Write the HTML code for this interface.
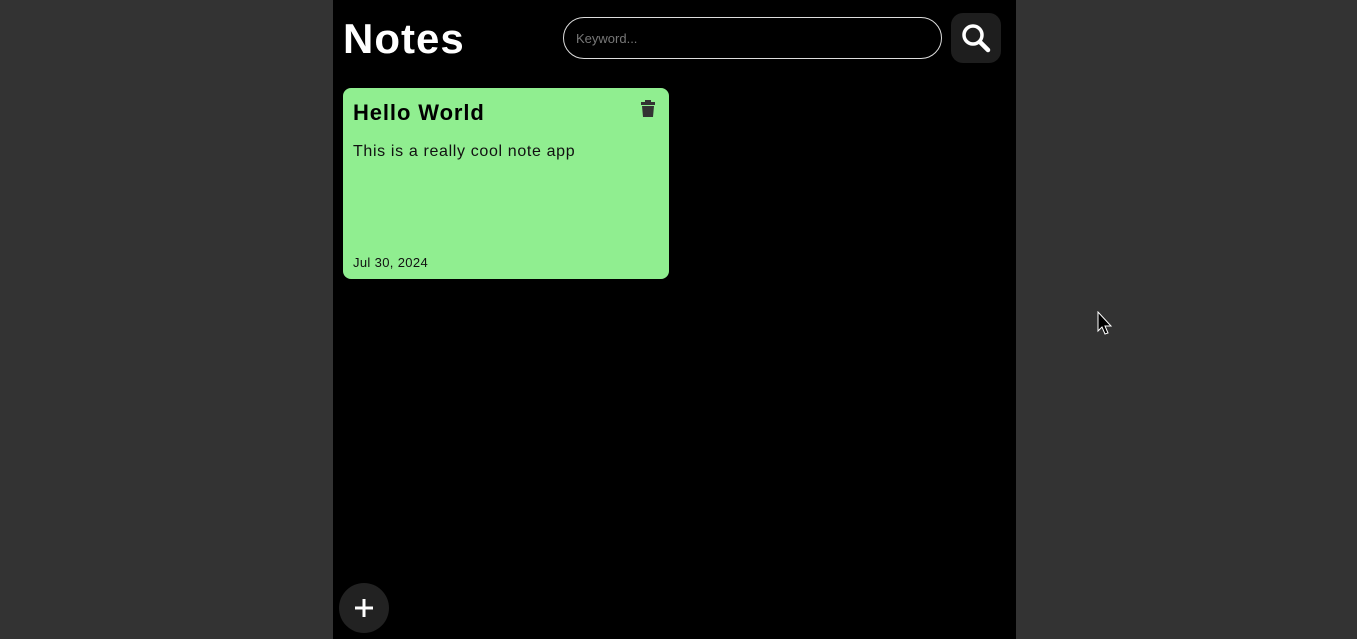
<!DOCTYPE html>
<html><head><style>
body{margin:0;width:1357px;height:639px;background:#333;position:relative;overflow:hidden;font-family:"Liberation Sans",sans-serif}
.app{position:absolute;left:333px;top:0;width:683px;height:639px;background:#000}
h1{position:absolute;left:10px;top:15px;margin:0;color:#fff;font-size:42px;font-weight:bold;letter-spacing:1px}
.search{position:absolute;left:230px;top:17px;width:379px;height:42px;border:1px solid #ddd;border-radius:21px;box-sizing:border-box}
.search span{position:absolute;left:12px;top:13px;font-size:13px;color:#777}
.sbtn{position:absolute;left:618px;top:13px;width:50px;height:50px;border-radius:12px;background:#1e1e1e}
.note{position:absolute;left:10px;top:88px;width:326px;height:191px;background:#90ee90;border-radius:8px}
.note h2{position:absolute;left:10px;top:12px;margin:0;font-size:22px;font-weight:bold;color:#000;letter-spacing:0.9px}
.body{position:absolute;left:10px;top:55px;font-size:16px;color:#111;letter-spacing:0.65px}
.date{position:absolute;left:10px;top:167px;font-size:13px;color:#111;letter-spacing:0.35px}
.add{position:absolute;left:6px;top:583px;width:50px;height:50px;border-radius:50%;background:#222}
</style></head><body>
<div class="app">
<h1>Notes</h1>
<div class="search"><span>Keyword...</span></div>
<div class="sbtn"><svg width="50" height="50" viewBox="0 0 50 50"><circle cx="22" cy="22" r="9" fill="none" stroke="#fff" stroke-width="3.5"/><line x1="29" y1="29" x2="37" y2="37" stroke="#fff" stroke-width="4.5" stroke-linecap="round"/></svg></div>
<div class="note"><h2>Hello World</h2>
<svg style="position:absolute;left:297px;top:12px" width="16" height="18" viewBox="0 0 16 18"><rect x="1" y="2" width="14" height="3" fill="#333"/><rect x="5" y="0" width="6" height="3" fill="#333"/><path d="M2 6h12l-1 11H3z" fill="#333"/></svg>
<div class="body">This is a really cool note app</div>
<div class="date">Jul 30, 2024</div></div>
<div class="add"><svg width="50" height="50"><path d="M25 16v18M16 25h18" stroke="#fff" stroke-width="3"/></svg></div>
</div>
<svg style="position:absolute;left:1097px;top:311px" width="16" height="24" viewBox="0 0 16 24"><path d="M1 1v19l4-4 3 7 3-1-3-7h6z" fill="#000" stroke="#fff" stroke-width="1"/></svg>
</body></html>
